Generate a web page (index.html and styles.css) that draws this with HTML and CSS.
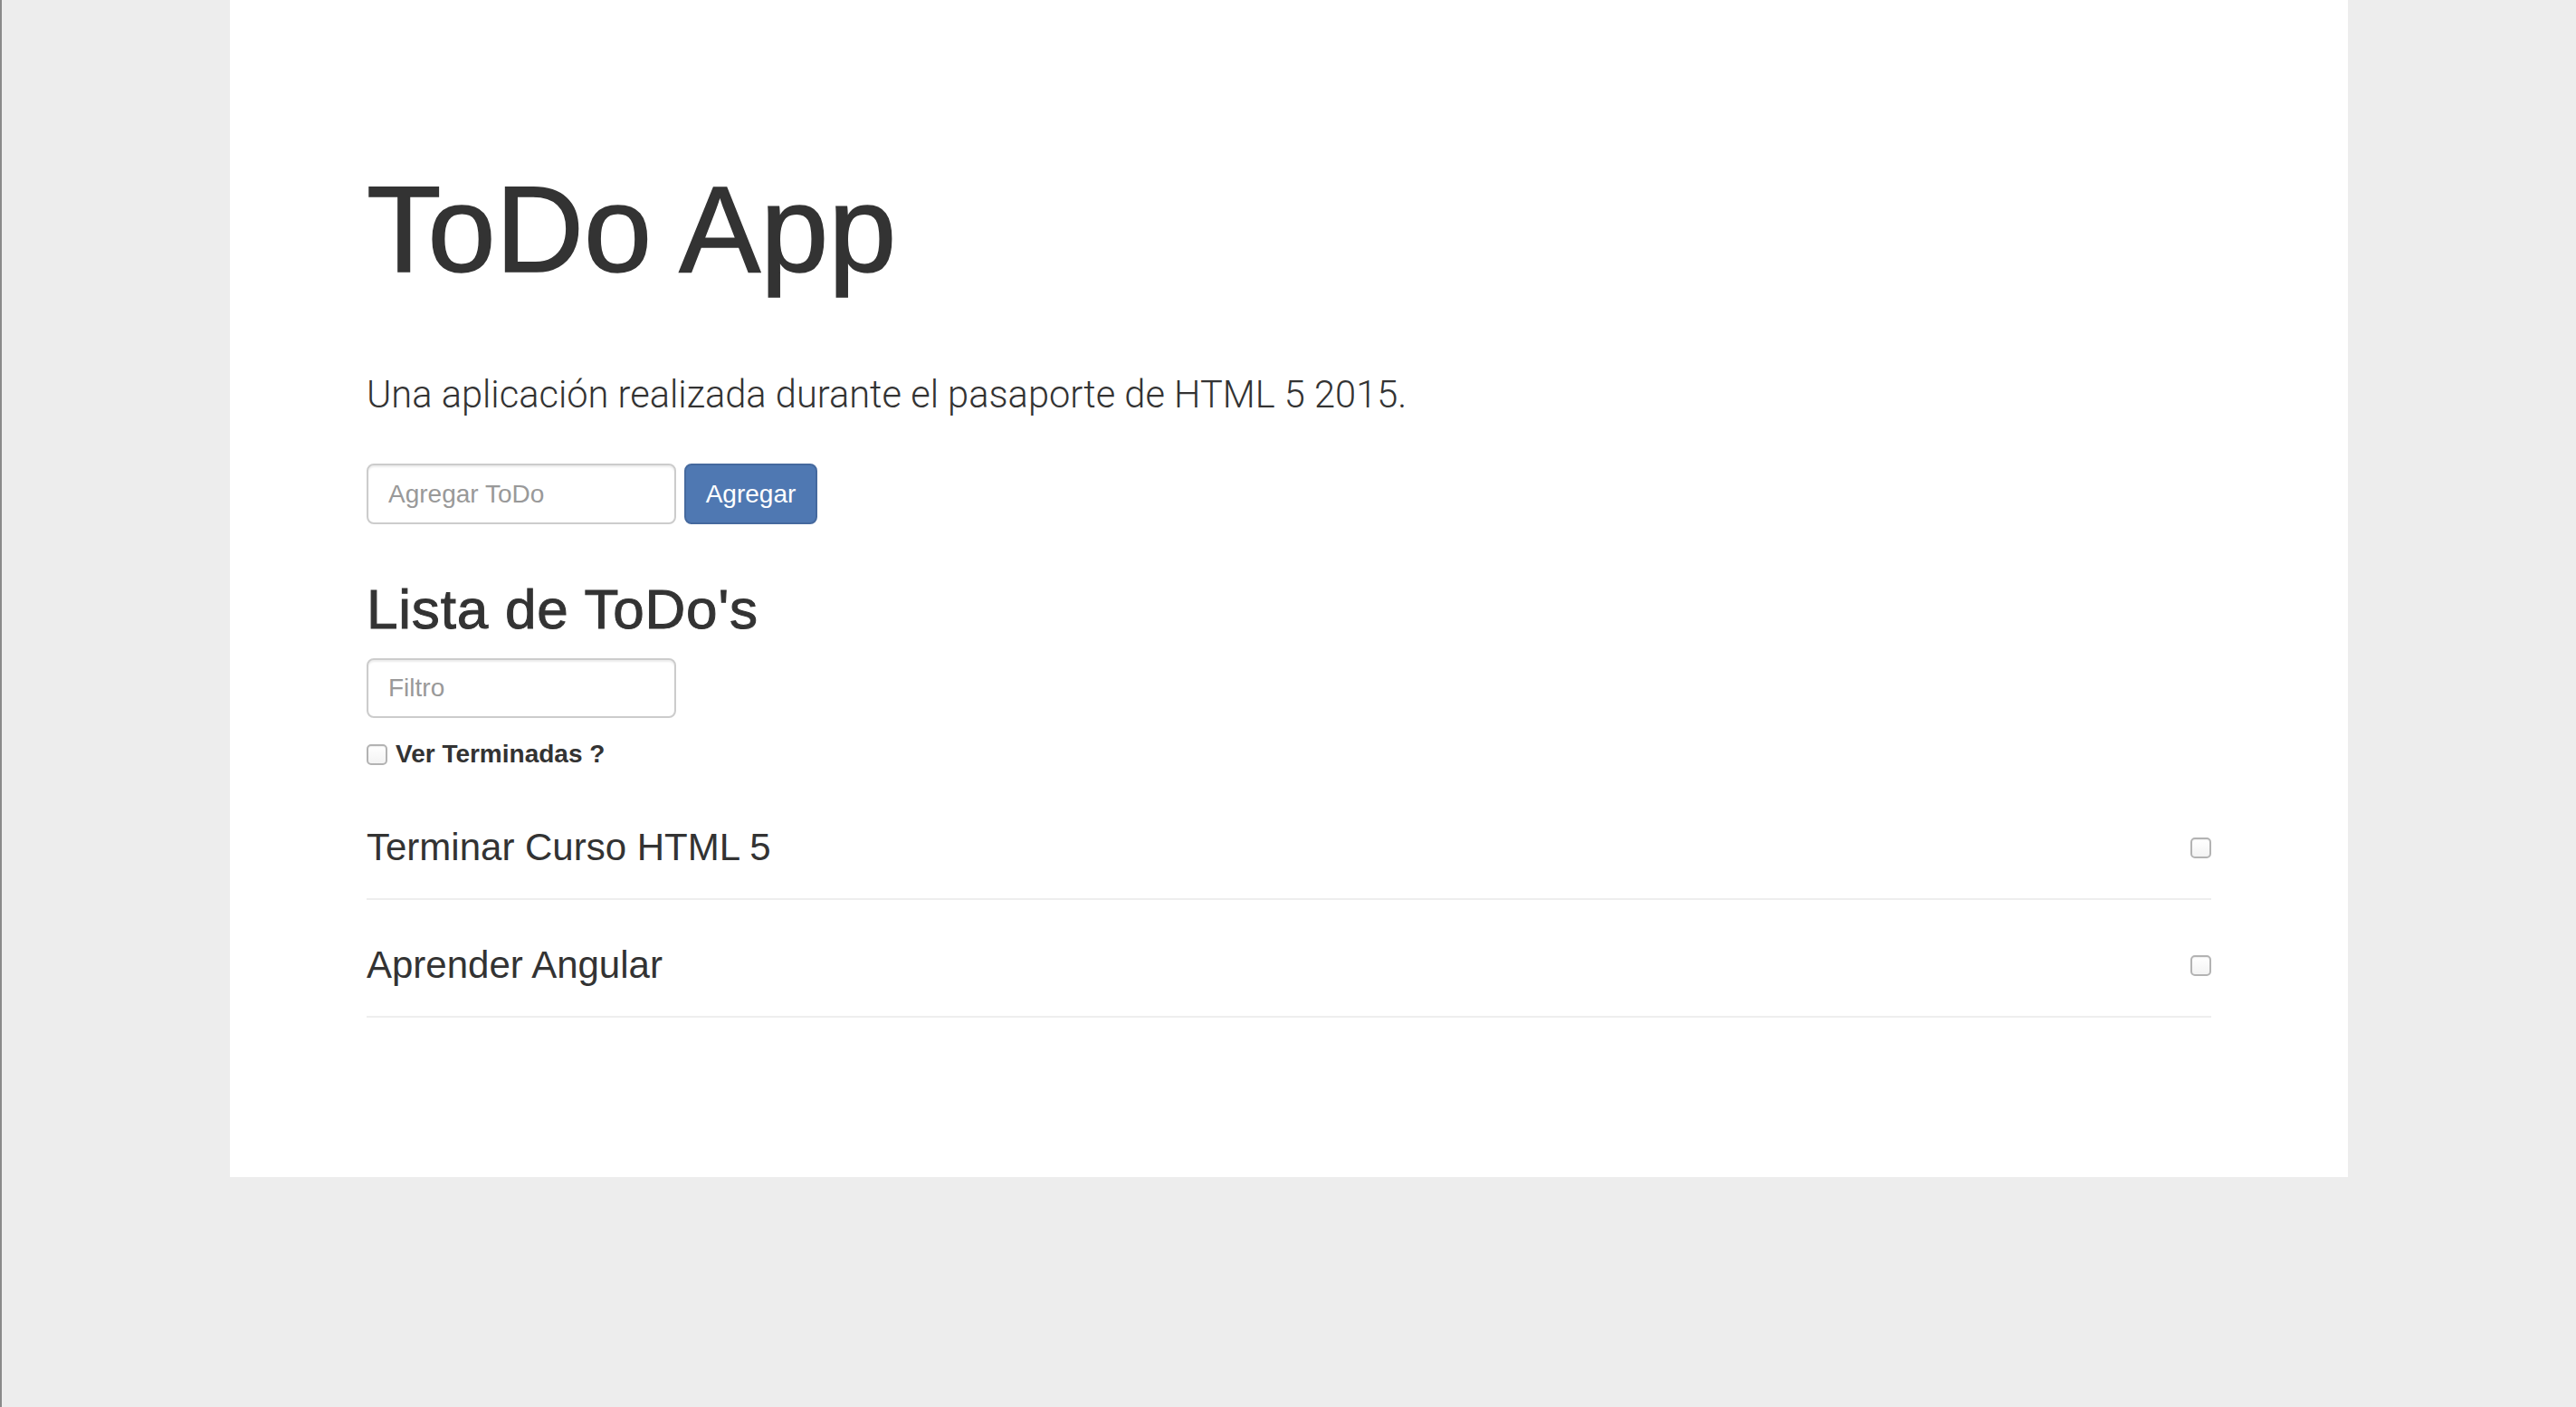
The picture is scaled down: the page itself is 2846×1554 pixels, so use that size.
FILE: index.html
```html
<!DOCTYPE html>
<html lang="es">
<head>
<meta charset="utf-8">
<title>ToDo App</title>
<link rel="stylesheet" href="styles.css">
</head>
<body>
<div class="page">
  <main class="panel">
    <h1 class="title">ToDo App</h1>
    <p class="lead">Una aplicación realizada durante el pasaporte de HTML 5 2015.</p>
    <form class="add-form">
      <input class="field" type="text" placeholder="Agregar ToDo">
      <button class="btn" type="button">Agregar</button>
    </form>
    <h2 class="subtitle">Lista de ToDo's</h2>
    <input class="field filter" type="text" placeholder="Filtro">
    <label class="check-row">
      <input class="check" type="checkbox">
      <span>Ver Terminadas ?</span>
    </label>
    <ul class="todo-list">
      <li class="todo">
        <span class="todo-text">Terminar Curso HTML 5</span>
        <input class="check" type="checkbox">
      </li>
      <li class="todo">
        <span class="todo-text">Aprender Angular</span>
        <input class="check" type="checkbox">
      </li>
    </ul>
  </main>
</div>
</body>
</html>
```

FILE: styles.css
```css
html, body {
  margin: 0;
  padding: 0;
}
body {
  background: #ededed;
  font-family: "Liberation Sans", Arial, sans-serif;
  color: #333;
}
.page {
  min-height: 1554px;
  border-left: 2px solid #8a8a8a;
  box-sizing: border-box;
  padding-left: 252px;
}
.panel {
  width: 2340px;
  height: 1300px;
  box-sizing: border-box;
  background: #fff;
  padding: 182px 151px 0;
}
.title {
  margin: 0;
  font-size: 135px;
  line-height: 143px;
  font-weight: normal;
  -webkit-text-stroke: 1.5px #333;
}
.lead {
  margin: 81px 0 0;
  font-family: Roboto, "Liberation Sans", sans-serif;
  font-size: 41.6px;
  line-height: 60px;
  font-weight: 300;
}
.add-form {
  margin: 46px 0 0;
  display: flex;
  gap: 9px;
}
.field {
  display: block;
  width: 342px;
  height: 67px;
  box-sizing: border-box;
  border: 2px solid #ccc;
  border-radius: 8px;
  padding: 0 22px;
  font-family: "Liberation Sans", Arial, sans-serif;
  font-size: 28px;
  color: #555;
  background: #fff;
  box-shadow: inset 0 2px 2px rgba(0,0,0,0.075);
  outline: none;
}
.field::placeholder {
  color: #999;
}
.btn {
  height: 67px;
  width: 147px;
  box-sizing: border-box;
  border: 2px solid #45699e;
  border-radius: 8px;
  background: #4f78b2;
  color: #fff;
  font-family: "Liberation Sans", Arial, sans-serif;
  font-size: 28px;
  padding: 0;
}
.subtitle {
  margin: 60px 0 0;
  font-size: 62px;
  line-height: 68px;
  font-weight: normal;
  letter-spacing: 0.8px;
  -webkit-text-stroke: 1px #333;
}
.filter {
  margin-top: 20px;
  height: 66px;
}
.check-row {
  margin-top: 20px;
  display: flex;
  align-items: center;
  gap: 9px;
  font-size: 28px;
  line-height: 40px;
  font-weight: bold;
}
.check {
  appearance: none;
  -webkit-appearance: none;
  margin: 0;
  width: 23px;
  height: 23px;
  box-sizing: border-box;
  border: 2px solid #b3b3b3;
  border-radius: 5px;
  background: linear-gradient(#ffffff, #f3f3f3);
  box-shadow: inset 0 1px 1px rgba(0,0,0,0.06);
  flex: none;
}
.todo-list {
  list-style: none;
  margin: 11px 0 0;
  padding: 0;
}
.todo {
  display: flex;
  align-items: center;
  justify-content: space-between;
  padding: 42px 0 26px;
  border-bottom: 2px solid #eee;
}
.todo-text {
  font-size: 42px;
  line-height: 60px;
}
```
